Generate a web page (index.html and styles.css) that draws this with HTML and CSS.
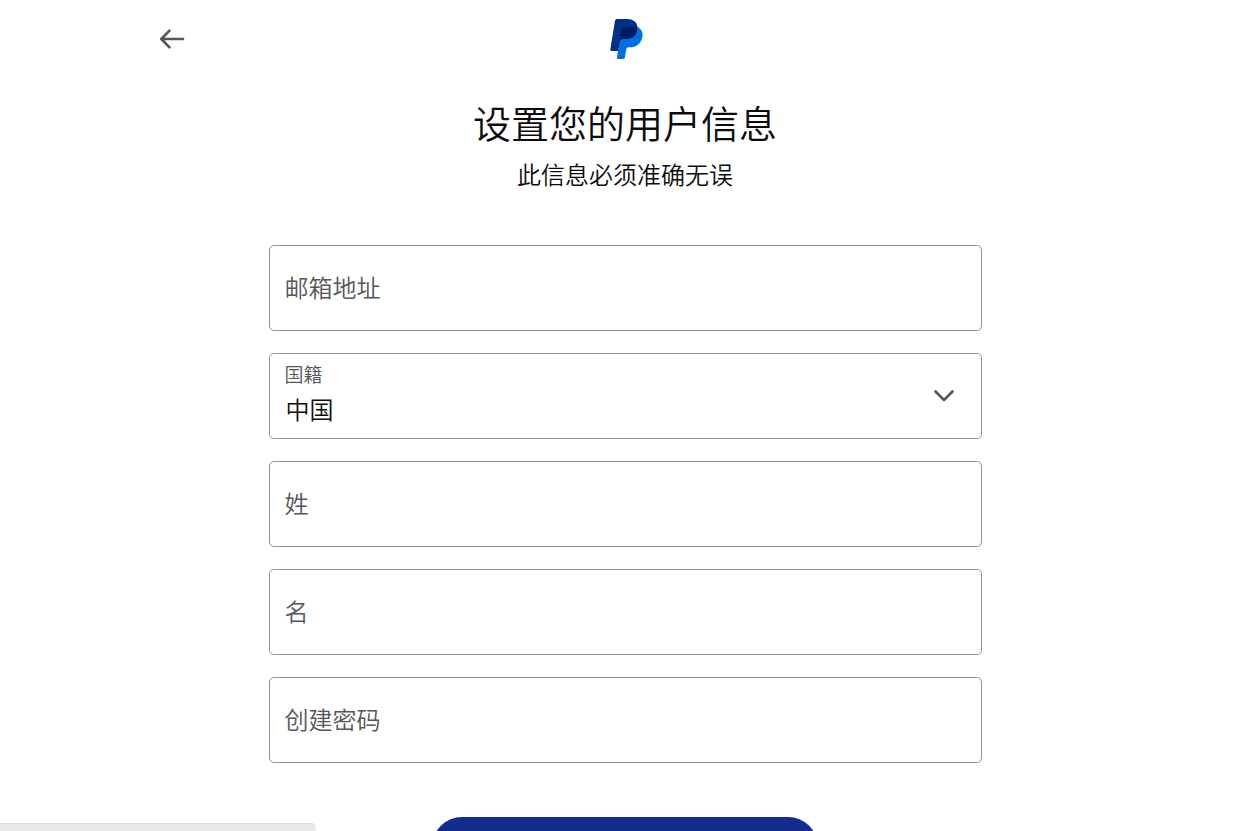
FILE: index.html
```html
<!DOCTYPE html>
<html lang="zh-CN">
<head>
  <meta charset="UTF-8">
  <title>设置您的用户信息</title>
  <meta name="viewport" content="width=device-width, initial-scale=1">
  <link rel="stylesheet" href="styles.css">
</head>
<body>
  <header class="header">
    <button class="back" type="button" aria-label="返回">
      <svg width="26" height="20" viewBox="0 0 26 20" fill="none" stroke="#545658" stroke-width="2.6" stroke-linecap="round" stroke-linejoin="round">
        <path d="M24 10H2.500M10.500 1.700L2.300 10l8.200 8.300"/>
      </svg>
    </button>
    <svg class="logo" width="36" height="40" viewBox="-9 0 108 120" role="img" aria-label="PayPal">
      <path fill="#0070e0" d="M82 23C94 29 100 40 97 54C93 75 78 85 59 85H54Q50 85 49 90L45 114Q44 120 39 120H24Q20 120 21 115L35 30Z"/>
      <path fill="#003087" d="M20 0H51C73 0 84 13 82 30C80 49 66 60 48 60H38Q31 60 30 66L25 96H4Q0 96 1 91L15 5Q16 0 20 0Z"/>
      <path fill="#001c64" d="M82 23C83 47 68 60 48 60H38Q31 60 29 67L35 30Q36 24 43 24Z"/>
    </svg>
  </header>

  <main class="content">
    <h1>设置您的用户信息</h1>
    <p class="subtitle">此信息必须准确无误</p>

    <form class="form">
      <div class="field">
        <input type="email" id="email" placeholder=" ">
        <label for="email">邮箱地址</label>
      </div>
      <div class="field select">
        <select id="nationality">
          <option>中国</option>
        </select>
        <label for="nationality">国籍</label>
        <svg class="chevron" width="20" height="12" viewBox="0 0 20 12" fill="none" stroke="#545658" stroke-width="2.600" stroke-linecap="round" stroke-linejoin="round">
          <path d="M1.500 1.500L10 10l8.500-8.500"/>
        </svg>
      </div>
      <div class="field">
        <input type="text" id="lastName" placeholder=" ">
        <label for="lastName">姓</label>
      </div>
      <div class="field">
        <input type="text" id="firstName" placeholder=" ">
        <label for="firstName">名</label>
      </div>
      <div class="field">
        <input type="password" id="password" placeholder=" ">
        <label for="password">创建密码</label>
      </div>
      <button class="submit" type="submit" aria-label="同意并创建账户"></button>
    </form>
  </main>

  <div class="status-bar"></div>
</body>
</html>
```

FILE: styles.css
```css
* {
  box-sizing: border-box;
}
body {
  margin: 0;
  background: #fff;
  color: #0c0c0d;
  font-family: "Noto Sans CJK SC", sans-serif;
  font-weight: 350;
}
.header {
  display: grid;
  grid-template-columns: 48px 1fr 48px;
  align-items: center;
  max-width: 954px;
  margin: 0 auto;
  padding-top: 15px;
}
.back {
  display: flex;
  align-items: center;
  justify-content: center;
  height: 48px;
  padding: 0;
  border: none;
  background: none;
  cursor: pointer;
}
.logo {
  justify-self: center;
}
.content {
  max-width: 745px;
  margin: 0 auto;
  padding: 35px 16px 54px;
}
h1 {
  margin: 0;
  font-size: 38px;
  font-weight: 350;
  line-height: 48px;
  text-align: center;
}
.subtitle {
  margin: 12px 0 55px;
  font-size: 24px;
  line-height: 32px;
  text-align: center;
}
.form {
  display: flex;
  flex-direction: column;
  gap: 22px;
}

/* label sits in the same grid cell as its control */
.field {
  display: grid;
  align-items: center;
}
.field > * {
  grid-area: 1 / 1;
}
.field input,
.field select {
  width: 100%;
  height: 86px;
  padding: 24px 16px 0;
  border: 1px solid #909294;
  border-radius: 5px;
  background: #fff;
  color: #0c0c0d;
  font: inherit;
  font-size: 24px;
  appearance: none;
}
.field label {
  padding: 0 16px 2px;
  color: #545658;
  font-size: 24px;
  line-height: 32px;
  pointer-events: none;
}
.field.select label,
.field input:focus + label,
.field input:not(:placeholder-shown) + label {
  align-self: start;
  padding-top: 5px;
  font-size: 19px;
}
.chevron {
  justify-self: end;
  margin-right: 28px;
  pointer-events: none;
}
.submit {
  align-self: center;
  width: 386px;
  height: 60px;
  margin-top: 32px;
  border: none;
  border-radius: 30px;
  background: #142c8e;
  cursor: pointer;
}
.status-bar {
  position: fixed;
  left: 0;
  bottom: 0;
  width: 316px;
  height: 8px;
  border-top: 1px solid #dcdcdf;
  border-top-right-radius: 5px;
  background: #e8e8ec;
}
```
